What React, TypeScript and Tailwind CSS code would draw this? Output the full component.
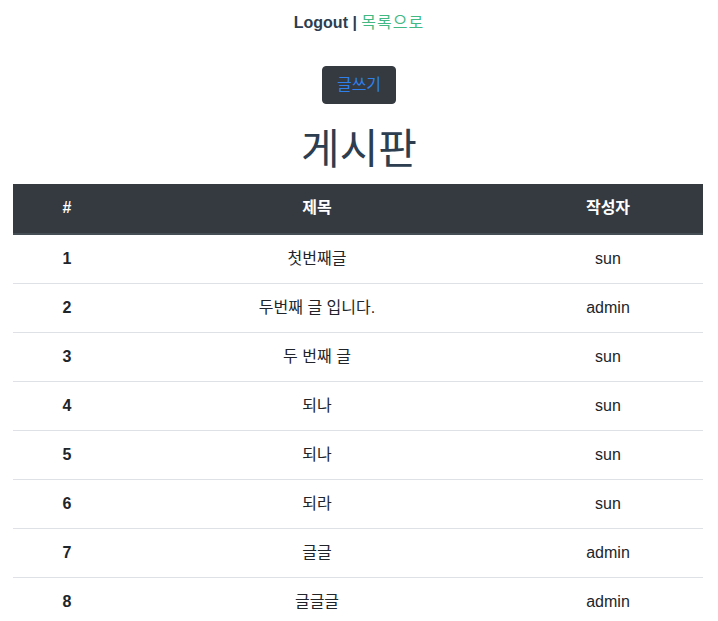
const rows = [
  { id: 1, title: "첫번째글", writer: "sun" },
  { id: 2, title: "두번째 글 입니다.", writer: "admin" },
  { id: 3, title: "두 번째 글", writer: "sun" },
  { id: 4, title: "되나", writer: "sun" },
  { id: 5, title: "되나", writer: "sun" },
  { id: 6, title: "되라", writer: "sun" },
  { id: 7, title: "글글", writer: "admin" },
  { id: 8, title: "글글글", writer: "admin" },
];

const App = () => {
  return (
    <div className="min-h-screen bg-white text-center font-['Liberation_Sans','Noto_Sans_CJK_KR',sans-serif] text-[#2c3e50]">
      {/* nav */}
      <div className="pt-[11px] text-base leading-6 font-bold">
        <a className="text-[#2c3e50]">Logout</a> |{" "}
        <a className="text-[#42b983] font-normal tracking-[1px]">목록으로</a>
      </div>

      <div className="mt-[31px]">
        <button className="rounded-[4px] border border-[#343a40] bg-[#343a40] px-[14px] py-[6px] text-base leading-6 text-[#2f80ed]">
          글쓰기
        </button>
      </div>

      <h1 className="mt-[22px] mb-[10px] text-[42px] leading-[48px] font-normal text-[#2c3e50]">게시판</h1>

      {/* board */}
      <div className="pl-[13px] pr-[15px]">
        <table className="w-full border-collapse text-base text-[#212529]">
          <thead>
            <tr className="bg-[#343a40] text-white">
              <th className="w-[108px] border-b-2 border-[#454d55] pt-3 pb-[13px] leading-6 font-bold">#</th>
              <th className="border-b-2 border-[#454d55] pt-3 pb-[13px] leading-6 font-bold">제목</th>
              <th className="w-[190px] border-b-2 border-[#454d55] pt-3 pb-[13px] leading-6 font-bold">작성자</th>
            </tr>
          </thead>
          <tbody>
            {rows.map((r, i) => (
              <tr key={r.id} className={i > 0 ? "border-t border-[#dee2e6]" : ""}>
                <th className="py-3 leading-6 font-bold">{r.id}</th>
                <td className="py-3 leading-6">{r.title}</td>
                <td className="py-3 leading-6">{r.writer}</td>
              </tr>
            ))}
          </tbody>
        </table>
      </div>
    </div>
  );
};

export default App;
